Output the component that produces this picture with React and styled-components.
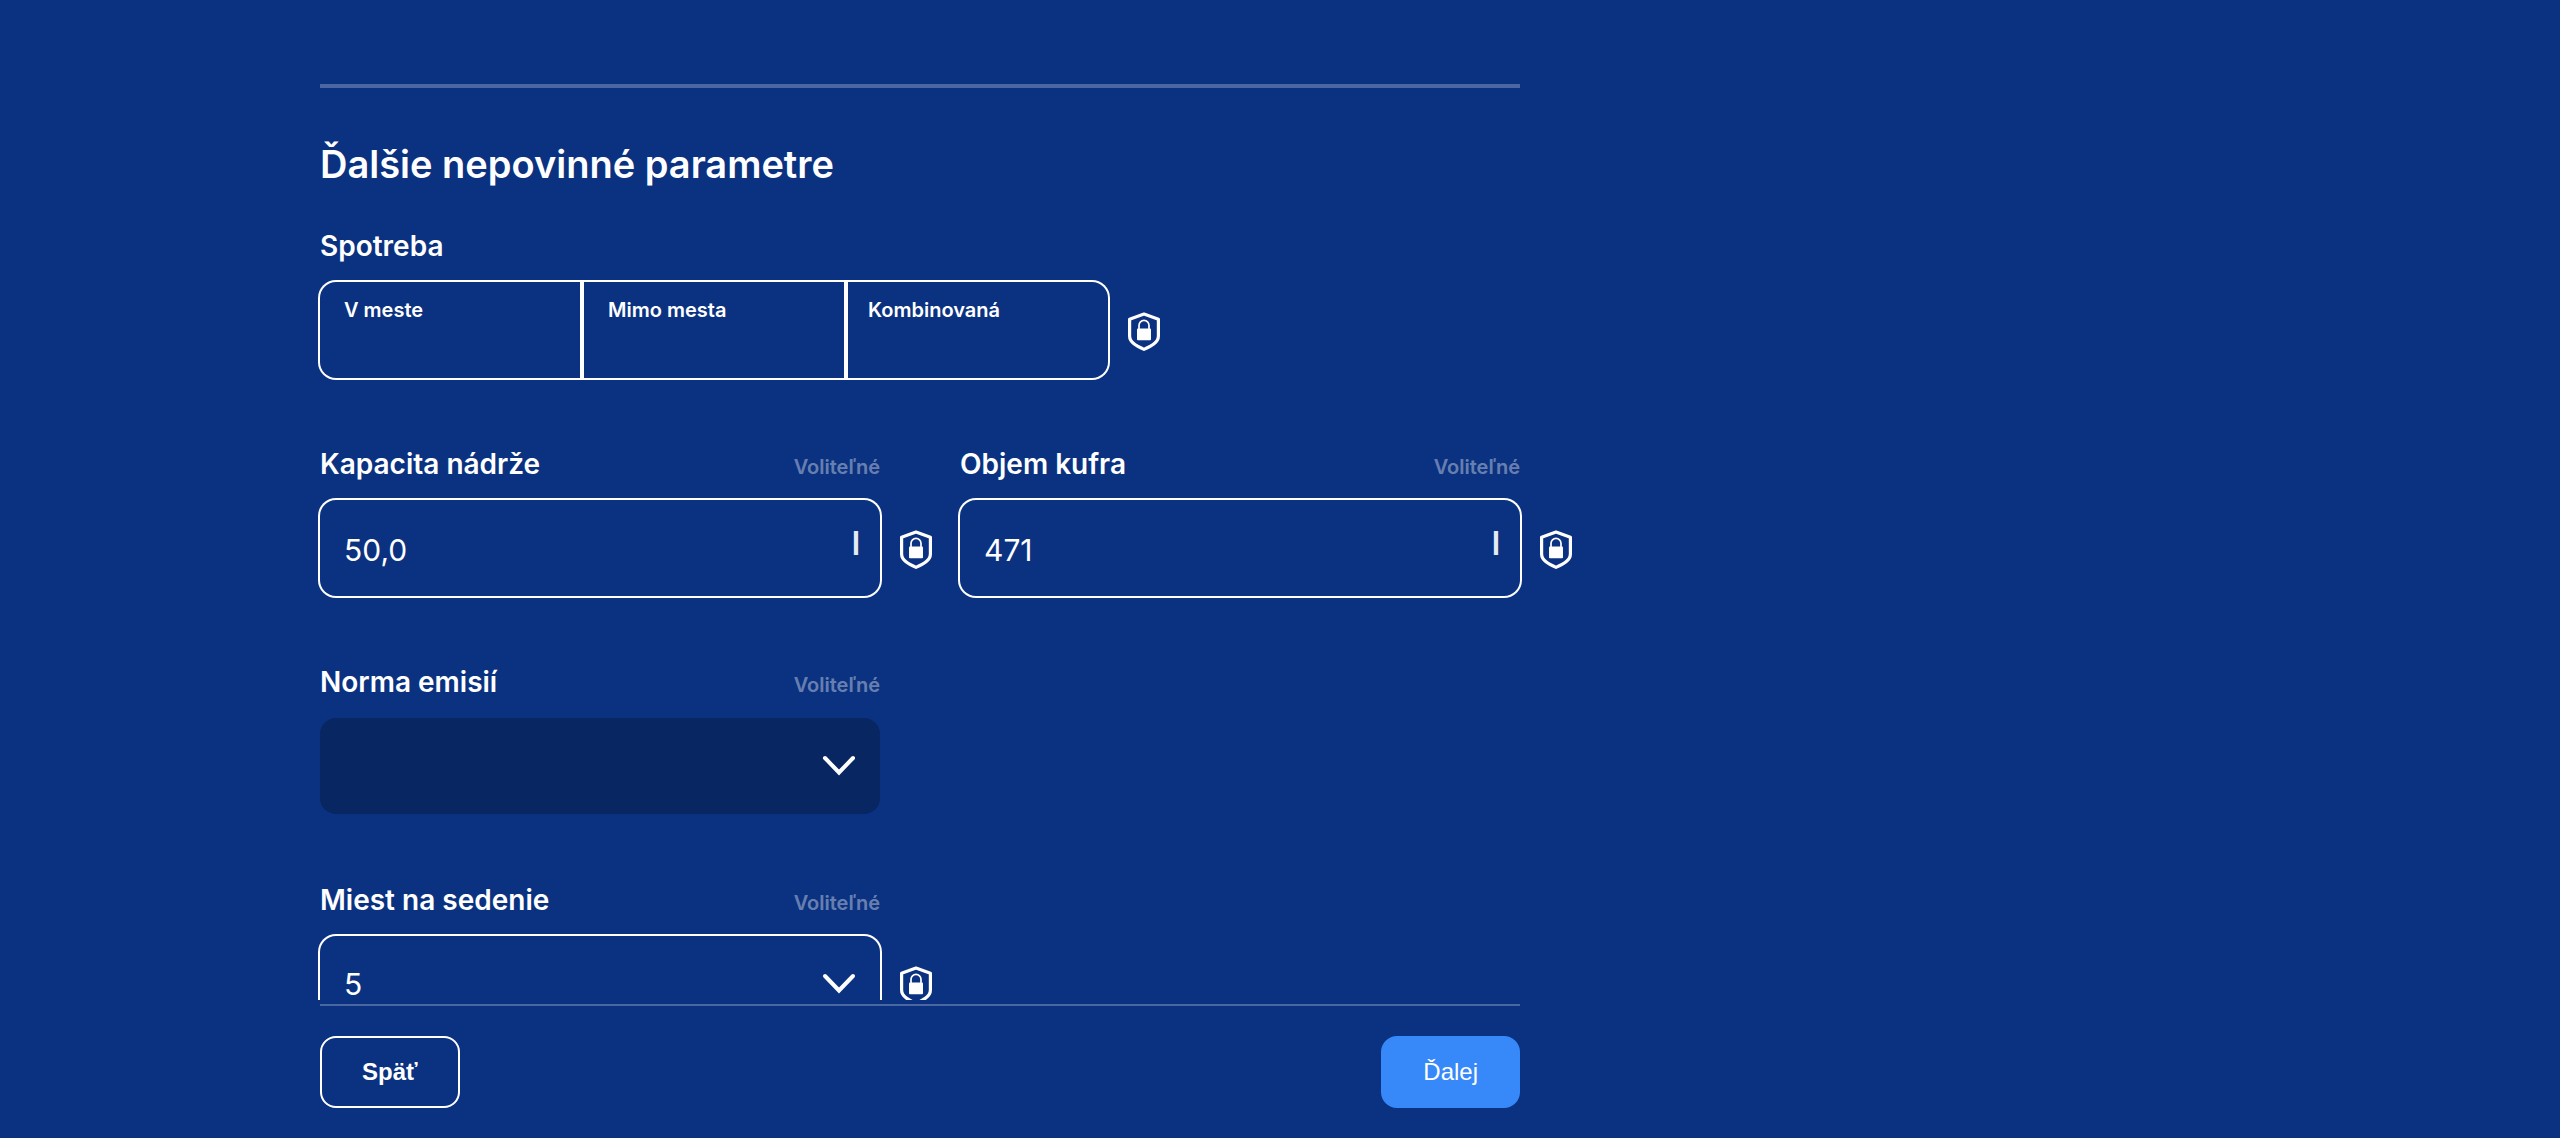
import React, { useId } from "react";
import styled, { createGlobalStyle, css } from "styled-components";

const color = {
  page: "#0b3281",
  sunken: "#082661",
  line: "rgba(255, 255, 255, 0.26)",
  muted: "rgba(255, 255, 255, 0.4)",
  primary: "#3788f8",
  text: "#ffffff",
};

const GlobalStyle = createGlobalStyle`
  *, *::before, *::after { box-sizing: border-box; }
  body {
    margin: 0;
    background: ${color.page};
    color: ${color.text};
    font-family: Inter, "Liberation Sans", sans-serif;
  }
`;

const Page = styled.form`
  display: flex;
  flex-direction: column;
  height: 100vh;
`;

const Scroller = styled.div`
  flex: 1;
  min-height: 0;
  overflow: auto;
  scrollbar-width: none;
  padding: 84px 12.5%;
`;

const Content = styled.main`
  max-width: 1200px;
`;

const Divider = styled.hr`
  height: 4px;
  margin: 0;
  border: 0;
  background: ${color.line};
`;

const Heading = styled.h2`
  margin: 50px 0 36px;
  font-size: 38px;
  line-height: 52px;
  font-weight: 600;
`;

const FieldGrid = styled.div`
  display: grid;
  grid-template-columns: repeat(2, minmax(0, 1fr));
  gap: 66px 80px;
  margin-top: 66px;
`;

const Field = styled.div`
  grid-column-start: ${(p) => (p.$first ? 1 : "auto")};
`;

const Group = styled.fieldset`
  min-width: 0;
  margin: 0;
  padding: 0;
  border: 0;
`;

const LabelRow = styled.div`
  display: flex;
  justify-content: space-between;
  align-items: baseline;
  height: 56px;
  line-height: 40px;
`;

const labelText = css`
  font-size: 28px;
  font-weight: 600;
`;

const Label = styled.label`
  ${labelText}
`;

const Legend = styled.legend`
  ${labelText}
  height: 56px;
  padding: 0;
  line-height: 40px;
`;

const Optional = styled.span`
  color: ${color.muted};
  font-size: 20px;
  font-weight: 600;
`;

const Control = styled.div`
  position: relative;
  display: flex;
  align-items: center;
  height: 96px;
  border-radius: 16px;
  background: ${(p) => (p.$sunken ? color.sunken : color.page)};
  box-shadow: ${(p) => (p.$sunken ? "none" : `0 0 0 2px ${color.text}`)};
`;

const entry = css`
  flex: 1;
  min-width: 0;
  height: 100%;
  border: 0;
  border-radius: 16px;
  outline: 0;
  background: transparent;
  color: inherit;
  font-family: inherit;
  font-size: 30px;
  font-weight: 400;
`;

const Entry = styled.input`
  ${entry}
  padding: 4px 24px 0;
`;

const Picker = styled.select`
  ${entry}
  appearance: none;
  padding: 0 72px 0 24px;

  option { background: ${color.page}; }
`;

const Unit = styled.span`
  padding: 0 20px 8px 0;
  font-size: 32px;
  line-height: 40px;
  font-weight: 600;
  opacity: 0.9;
`;

const Chevron = styled.svg`
  position: absolute;
  right: 22px;
  width: 38px;
  height: 22px;
  pointer-events: none;
`;

const Shield = styled.svg`
  position: absolute;
  top: 30px;
  left: calc(100% + 20px);
  width: 32px;
  height: 40px;
`;

const Consumption = styled(Control)`
  max-width: 788px;
  background: ${color.text};
`;

const Cells = styled.div`
  display: grid;
  grid-template-columns: repeat(3, minmax(0, 1fr));
  gap: 4px;
  width: 100%;
  height: 100%;
  overflow: hidden;
  border-radius: 16px;
`;

const Cell = styled.label`
  display: flex;
  flex-direction: column;
  padding: 16px 24px;
  background: ${color.page};
  font-size: 20px;
  line-height: 24px;
  font-weight: 600;

  &:last-child { padding: 16px 20px; }
`;

const CellInput = styled.input`
  ${entry}
  width: 100%;
  padding: 0;
`;

const Footer = styled.footer`
  padding: 4px 12.5% 30px;
`;

const Actions = styled.div`
  display: flex;
  justify-content: space-between;
  max-width: 1200px;
  padding-top: 30px;
  border-top: 2px solid ${color.line};
`;

const Button = styled.button`
  height: 72px;
  padding: 0 40px;
  border: 2px solid ${(p) => (p.$primary ? color.primary : color.text)};
  border-radius: 16px;
  background: ${(p) => (p.$primary ? color.primary : "transparent")};
  color: inherit;
  font-family: "Liberation Sans", Arial, sans-serif;
  font-size: 24px;
  font-weight: ${(p) => (p.$primary ? 400 : 700)};
`;

function LockShield() {
  return (
    <Shield viewBox="0 0 32 40" fill="none" aria-hidden="true">
      <path
        d="M16 2 L30.4 7.200 V24 C30.4 30.5 23.5 34 16 37.4 C8.5 34 1.6 30.5 1.6 24 V7.2 Z"
        stroke="#fff"
        strokeWidth="3.2"
        strokeLinejoin="round"
      />
      <path d="M11 18 V13.4 a5 5 0 0 1 10 0 V18" stroke="#fff" strokeWidth="1.7" />
      <rect x="9" y="16.6" width="14" height="11.6" rx="1" fill="#fff" />
    </Shield>
  );
}

function DownChevron() {
  return (
    <Chevron viewBox="0 0 38 22" fill="none" aria-hidden="true">
      <path d="M5 3 L19 17.5 L33 3" stroke="#fff" strokeWidth="4" strokeLinecap="round" strokeLinejoin="miter" />
    </Chevron>
  );
}

function FieldHeader({ id, label }) {
  return (
    <LabelRow>
      <Label htmlFor={id}>{label}</Label>
      <Optional>Voliteľné</Optional>
    </LabelRow>
  );
}

function TextField({ label, value, unit }) {
  const id = useId();
  return (
    <Field>
      <FieldHeader id={id} label={label} />
      <Control>
        <Entry id={id} type="text" inputMode="decimal" defaultValue={value} />
        <Unit>{unit}</Unit>
        <LockShield />
      </Control>
    </Field>
  );
}

function SelectField({ label, value, options, locked }) {
  const id = useId();
  return (
    <Field $first>
      <FieldHeader id={id} label={label} />
      <Control $sunken={!locked}>
        <Picker id={id} defaultValue={value}>
          {options.map((option) => (
            <option key={option} value={option}>{option}</option>
          ))}
        </Picker>
        <DownChevron />
        {locked && <LockShield />}
      </Control>
    </Field>
  );
}

export default function App() {
  return (
    <Page onSubmit={(event) => event.preventDefault()}>
      <GlobalStyle />
      <Scroller>
        <Content>
          <Divider />
          <Heading>Ďalšie nepovinné parametre</Heading>
          <Group>
            <Legend>Spotreba</Legend>
            <Consumption>
              <Cells>
                {["V meste", "Mimo mesta", "Kombinovaná"].map((name) => (
                  <Cell key={name}>
                    {name}
                    <CellInput type="text" inputMode="decimal" />
                  </Cell>
                ))}
              </Cells>
              <LockShield />
            </Consumption>
          </Group>
          <FieldGrid>
            <TextField label="Kapacita nádrže" value="50,0" unit="l" />
            <TextField label="Objem kufra" value="471" unit="l" />
            <SelectField label="Norma emisií" value="" options={[""]} />
            <SelectField label="Miest na sedenie" value="5" options={["5"]} locked />
          </FieldGrid>
        </Content>
      </Scroller>
      <Footer>
        <Actions>
          <Button type="button">Späť</Button>
          <Button type="submit" $primary>Ďalej</Button>
        </Actions>
      </Footer>
    </Page>
  );
}
